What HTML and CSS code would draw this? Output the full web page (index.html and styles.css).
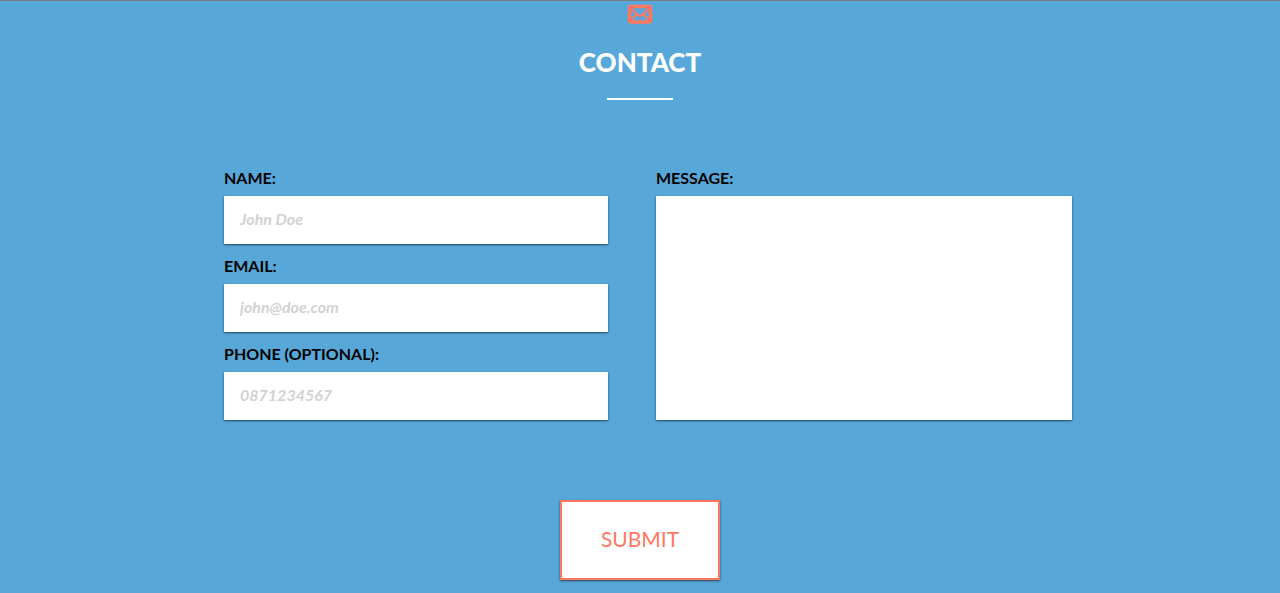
FILE: index.html
```html
<!DOCTYPE html>
<html lang="en">
<head>
<meta charset="utf-8">
<title>Contact</title>
<meta name="viewport" content="width=device-width, initial-scale=1">
<link rel="stylesheet" href="styles.css">
</head>
<body>
<section class="contact">
  <svg class="contact-icon" viewBox="0 0 26 20" aria-hidden="true">
    <rect x="2.500" y="2.500" width="21" height="15.500" rx="2" fill="none" stroke="#ff7761" stroke-width="3.500"/>
    <path d="M4 4.500 L11 11 Q13 12.800 15 11 L22 4.500 M4 16 L9.500 10.500 M22 16 L16.500 10.500" fill="none" stroke="#ff7761" stroke-width="2"/>
  </svg>
  <h2 class="contact-title">CONTACT</h2>
  <form class="contact-form">
    <div class="fields">
      <div class="details">
        <div class="field">
          <label class="label" for="name">NAME:</label>
          <input class="control" id="name" type="text" placeholder="John Doe">
        </div>
        <div class="field">
          <label class="label" for="email">EMAIL:</label>
          <input class="control" id="email" type="email" placeholder="john@doe.com">
        </div>
        <div class="field">
          <label class="label" for="phone">PHONE (OPTIONAL):</label>
          <input class="control" id="phone" type="tel" placeholder="0871234567">
        </div>
      </div>
      <div class="field">
        <label class="label" for="message">MESSAGE:</label>
        <textarea class="control message" id="message"></textarea>
      </div>
    </div>
    <button class="submit" type="submit">SUBMIT</button>
  </form>
</section>
</body>
</html>
```
FILE: styles.css
```css
* {
  box-sizing: border-box;
}

body {
  margin: 0;
  min-height: 100vh;
  background: #57a8d9;
  font-family: Lato, "Liberation Sans", sans-serif;
}

.contact {
  display: flex;
  flex-direction: column;
  align-items: center;
  padding: 3px 0 13px;
  border-top: 1px solid #7b7b7b;
}

.contact-icon {
  width: 26px;
  height: 20px;
}

.contact-title {
  margin: 22px 0 0;
  color: #fff;
  font-size: 26px;
  font-weight: 900;
  line-height: 32px;
}

.contact-title::after {
  content: "";
  display: block;
  width: 66px;
  height: 2px;
  margin: 20px auto 0;
  background: #fff;
}

.contact-form {
  display: flex;
  flex-direction: column;
  align-items: center;
  width: 100%;
  max-width: 864px;
  margin-top: 68px;
}

.fields {
  display: grid;
  grid-template-columns: 12fr 13fr;
  gap: 48px;
  width: 100%;
  padding-left: 16px;
}

.details {
  display: flex;
  flex-direction: column;
  gap: 12px;
}

.field {
  display: flex;
  flex-direction: column;
  gap: 8px;
}

.label {
  color: #000;
  font-size: 16px;
  font-weight: 700;
  line-height: 20px;
}

.control {
  width: 100%;
  height: 48px;
  padding: 0 16px 4px;
  border: 0;
  border-radius: 0;
  background: #fff;
  box-shadow: 0 1px 2px rgba(0, 0, 0, 0.6);
  color: #000;
  font: 16px Lato, "Liberation Sans", sans-serif;
}

.control::placeholder {
  color: #d2d2d2;
  font-style: italic;
  font-weight: 700;
  opacity: 1;
}

.message {
  flex: 1;
  padding: 16px;
  resize: none;
}

.submit {
  width: 160px;
  height: 80px;
  margin-top: 80px;
  padding: 0 0 4px;
  border: 2px solid #ff7761;
  background: #fff;
  box-shadow: 0 1px 2px rgba(0, 0, 0, 0.6);
  color: #ff7761;
  font: 21px Lato, "Liberation Sans", sans-serif;
}
```
